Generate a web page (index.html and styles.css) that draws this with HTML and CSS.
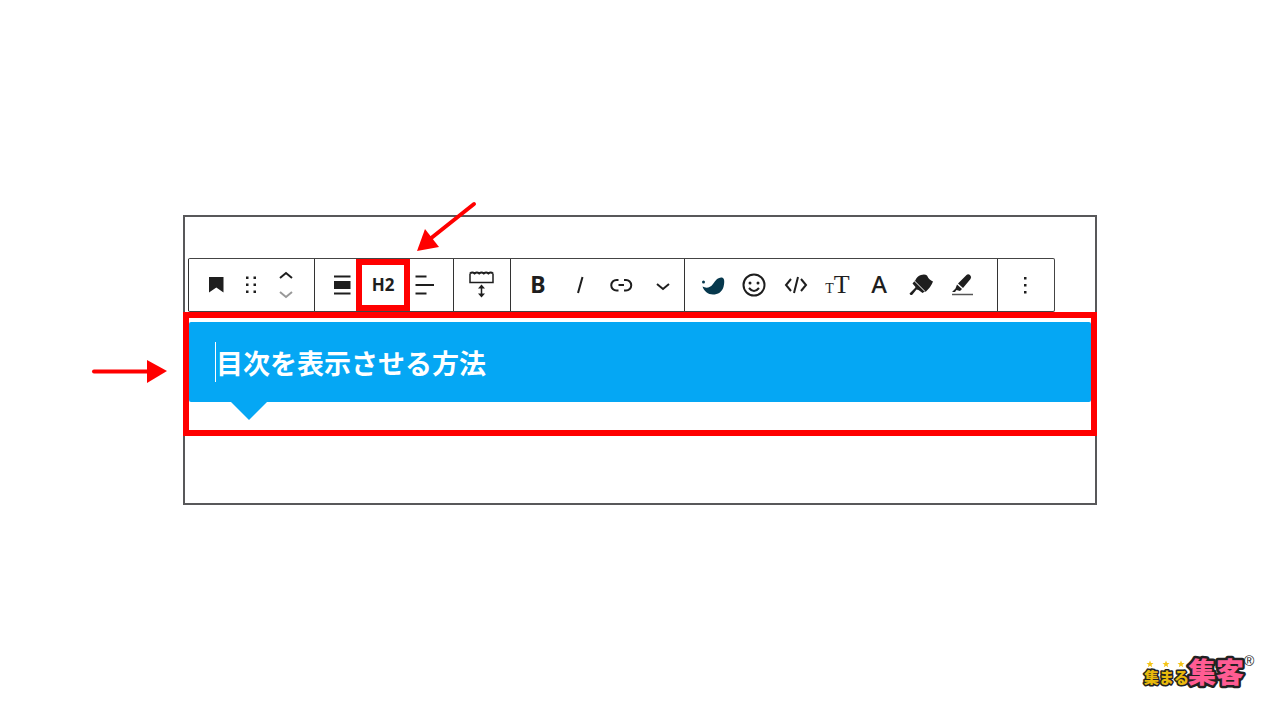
FILE: index.html
```html
<!DOCTYPE html>
<html lang="ja">
<head>
<meta charset="utf-8">
<title>目次を表示させる方法</title>
<link rel="stylesheet" href="styles.css">
</head>
<body>
<main class="page">
  <section class="panel">
    <div class="toolbar" role="toolbar" aria-label="ブロックツール">
      <div class="group group-block">
        <button class="tool" aria-label="見出し"><svg class="icon" viewBox="-16 -16 32 32"><path class="fill" d="M-7-8H7.500V7.500L.3 2.500-7 7.500z"/></svg></button>
        <button class="tool" aria-label="ドラッグ"><svg class="icon" viewBox="-16 -16 32 32"><path class="fill" d="M-5-8.500h2.500v2.500h-2.500zM2.500-8.500h2.500v2.500h-2.500zM-5-1.500h2.500v2.500h-2.500zM2.500-1.500h2.500v2.500h-2.500zM-5 5.500h2.500v2.500h-2.500zM2.500 5.500h2.500v2.500h-2.500z"/></svg></button>
        <button class="tool" aria-label="移動"><svg class="icon" viewBox="-16 -16 32 32"><path class="line" d="M-6-7 0-12 6-7"/><path class="line muted" d="M-6 7 0 12 6 7"/></svg></button>
      </div>
      <div class="group">
        <button class="tool" aria-label="配置"><svg class="icon" viewBox="-16 -16 32 32"><path class="fill" d="M-8-9.500H8.500v2H-8zM-8-4H8.500V4H-8zM-8 7.500H8.500v2H-8z"/></svg></button>
        <button class="tool level">H2</button>
        <button class="tool" aria-label="テキスト配置"><svg class="icon" viewBox="-16 -16 32 32"><path class="line" d="M-8.500-8.500H2.500M-8.500 0H10M-8.500 8.500H2.500"/></svg></button>
      </div>
      <div class="group">
        <button class="tool" aria-label="余白"><svg class="icon" viewBox="-16 -16 32 32"><path class="line thin" d="M-11-11.500V-2.500H12V-11.500"/><path class="line" d="M-11-11.500q2.300-2 4.600 0q2.300-2 4.600 0q2.300-2 4.600 0q2.300-2 4.600 0q2.300-2 4.600 0"/><path class="line thin" d="M.5 1.500V11"/><path class="fill" d="M.5-.5 4 3.500H-3zM.5 12.500 4 8.500H-3z"/></svg></button>
      </div>
      <div class="group group-format">
        <button class="tool bold">B</button>
        <button class="tool" aria-label="斜体"><svg class="icon" viewBox="-16 -16 32 32"><path class="line" d="M2.500-8-2 8"/></svg></button>
        <button class="tool" aria-label="リンク"><svg class="icon" viewBox="-16 -16 32 32"><path class="line" d="M-2.500-5H-4.500a5 5 0 0 0 0 10.500h2M3-5H5a5 5 0 0 1 0 10.500H3M-2.500 0H3"/></svg></button>
        <button class="tool" aria-label="さらに表示"><svg class="icon" viewBox="-16 -16 32 32"><path class="line" d="M-6-1 0 4 6-1"/></svg></button>
      </div>
      <div class="group group-extra">
        <button class="tool" aria-label="装飾"><svg class="icon" viewBox="-16 -16 32 32"><path class="bird" d="M-10.500 1.500C-7 3.500-3 3 0-1C3-6 6-8 9-7.500C12-7 11.500-2 10.500 2C9 7 5 9.500 0 9.500C-5 9.500-9 6-10.500 1.500z"/><circle class="bird" cx="-9.500" cy="-3" r="1.500"/></svg></button>
        <button class="tool" aria-label="絵文字"><svg class="icon" viewBox="-16 -16 32 32"><circle class="line" r="10.500"/><circle class="fill" cx="-4" cy="-2" r="1.500"/><circle class="fill" cx="4" cy="-2" r="1.500"/><path class="line" d="M-5 3Q0 9 5 3"/></svg></button>
        <button class="tool" aria-label="コード"><svg class="icon" viewBox="-16 -16 32 32"><path class="line" d="M-5-6-10 0-5 6M5-6 10 0 5 6M2-8-2 8"/></svg></button>
        <button class="tool size" aria-label="文字サイズ"><span class="size-small">T</span><span class="size-large">T</span></button>
        <button class="tool letter">A</button>
        <button class="tool" aria-label="背景色"><svg class="icon" viewBox="-16 -16 32 32"><path class="fill" d="M-6-4Q-4-9 0-10Q4-11 6-9.500Q8-5 12-3.500Q10 2 4.500 7z"/><path class="fill" d="M-6-4.500 4.500 6 1.500 8-2.500 5-4.500 4.500-8.500 9.500Q-10.500 11-11.500 8.500L-6 3-5.500 2-8.500-1.500z"/><path class="gap" d="M-6.500-4 4 6.500"/></svg></button>
        <button class="tool" aria-label="マーカー"><svg class="icon" viewBox="-16 -16 32 32"><path class="fill" d="M4.500-10Q6-11.500 8-10Q10-8 8.500-6L1 3-4-1.500zM-5-.5 0 4-2 6-5.500 5-7 7H-10L-6.500 3.500z"/><path class="line thin underline" d="M-10 9.500H11"/></svg></button>
      </div>
      <div class="group">
        <button class="tool" aria-label="オプション"><svg class="icon" viewBox="-16 -16 32 32"><path class="fill" d="M-1-8h2.500v2.500h-2.500zM-1-1h2.500v2.500h-2.500zM-1 6h2.500v2.500h-2.500z"/></svg></button>
      </div>
    </div>
    <div class="highlight">
      <h2 class="heading">目次を表示させる方法</h2>
    </div>
    <svg class="arrow arrow-top" viewBox="0 0 64 54"><path class="shaft" d="M60 4 16 39"/><path class="head" d="M3 51 11 29 25 47z"/></svg>
    <svg class="arrow arrow-side" viewBox="0 0 80 30"><path class="shaft" d="M4 14.500H60"/><path class="head" d="M57 3 77 14 57 26z"/></svg>
  </section>
  <footer class="brand">
    <svg class="logo" viewBox="0 0 120 48" role="img" aria-label="集まる集客">
      <defs><path id="star" d="M0-3.500 1-1H3.500L1.500.7 2.200 3.300 0 1.800-2.200 3.300-1.500.7-3.500-1H-1z"/></defs>
      <use class="star" href="#star" x="10" y="16"/><use class="star" href="#star" x="26" y="16"/><use class="star" href="#star" x="41" y="16"/>
      <text class="word-large" x="48" y="35">集客</text>
      <text class="word-small" x="4" y="35">集まる</text>
      <text class="registered" x="104" y="18">®</text>
    </svg>
  </footer>
</main>
</body>
</html>
```
FILE: styles.css
```css
* {
  box-sizing: border-box;
}

body {
  margin: 0;
  background: #fff;
  color: #1e1e1e;
  font-family: "Noto Sans", "Noto Sans CJK JP", sans-serif;
}

.page {
  display: flex;
  flex-direction: column;
  min-height: 100vh;
  padding: 215px 183px 0;
}

.panel {
  position: relative;
  padding: 41px 0 67px;
  border: 2px solid #58585a;
}

.toolbar {
  display: grid;
  grid-template-columns: 126px 139px 57px 174px 313px 57px;
  width: max-content;
  height: 54px;
  margin-left: 3px;
  border: 1px solid #444;
  border-left: 0;
  border-radius: 2px;
}

.group {
  display: flex;
  align-items: center;
  padding: 0 8px 0 6px;
  border-left: 1px solid #333;
}

.group-block {
  padding: 0 11px 0 9px;
}

.group-format {
  padding-right: 0;
}

.group-extra {
  padding: 0 14px 0 7px;
}

.tool {
  display: flex;
  flex: 1;
  align-items: center;
  justify-content: center;
  height: 40px;
  padding: 0;
  border: 0;
  background: none;
  color: inherit;
  font: 22px/40px "Noto Sans", sans-serif;
}

.icon {
  flex: none;
  width: 32px;
  height: 32px;
}

.fill {
  fill: #1e1e1e;
}

.line {
  fill: none;
  stroke: #1e1e1e;
  stroke-width: 2;
}

.thin {
  stroke-width: 1.5;
}

.muted {
  stroke: #999;
}

.underline {
  stroke: #555;
}

.bird {
  fill: #06384d;
}

.gap {
  stroke: #fff;
  stroke-width: 1;
}

.level {
  box-shadow: 0 0 0 6px #f00;
  font-size: 17px;
  font-weight: 700;
}

.bold {
  padding-bottom: 2px;
  font-size: 23px;
  font-weight: 700;
}

.letter {
  padding-bottom: 2px;
  font-size: 24px;
  font-weight: 500;
}

.size {
  align-items: baseline;
  font-family: "Liberation Serif", serif;
}

.size-small {
  font-size: 14px;
}

.size-large {
  font-size: 26px;
}

.highlight {
  position: relative;
  margin: 0 -2px;
  padding: 4px 0 28px;
  border: 6px solid #f00;
}

.heading {
  position: relative;
  margin: 0;
  padding: 21px 27px 19px;
  border-radius: 2px;
  background: #05a7f4;
  color: #fff;
  font: 700 27px/40px "Noto Sans CJK JP", sans-serif;
}

.heading::before {
  content: "";
  position: absolute;
  top: 20px;
  left: 26px;
  width: 1px;
  height: 40px;
  background: #fff;
}

.heading::after {
  content: "";
  position: absolute;
  top: 100%;
  left: 42px;
  border: solid transparent;
  border-width: 18px 18px 0;
  border-top-color: #05a7f4;
}

.arrow {
  position: absolute;
}

.arrow-top {
  top: -17px;
  left: 229px;
  width: 64px;
  height: 54px;
}

.arrow-side {
  top: 140px;
  left: -95px;
  width: 80px;
  height: 30px;
}

.shaft {
  stroke: #f00;
  stroke-width: 4;
  stroke-linecap: round;
}

.head {
  fill: #f00;
}

.brand {
  display: flex;
  justify-content: flex-end;
  margin: auto -163px 24px 0;
}

.logo {
  width: 120px;
  height: 48px;
}

.star {
  fill: #f5c516;
}

.word-small,
.word-large {
  font-family: "Noto Sans CJK JP", sans-serif;
  font-weight: 900;
  paint-order: stroke;
  stroke: #222;
  stroke-linejoin: round;
}

.word-small {
  fill: #e8b90c;
  font-size: 15px;
  stroke-width: 3;
}

.word-large {
  fill: #ff5c93;
  font-size: 28px;
  stroke-width: 5;
}

.registered {
  fill: #222;
  font-family: "Liberation Sans", sans-serif;
  font-size: 14px;
}
```
